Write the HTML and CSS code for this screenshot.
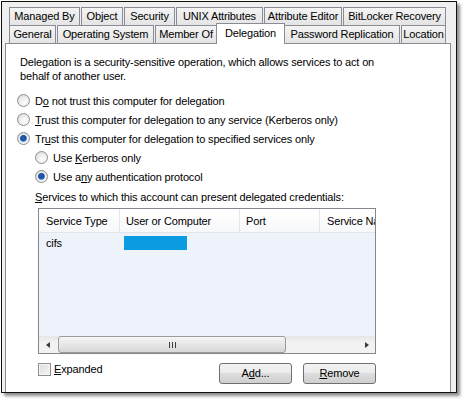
FILE: index.html
```html
<!DOCTYPE html>
<html>
<head>
<meta charset="utf-8">
<link rel="stylesheet" href="styles.css">
</head>
<body>
<div class="frame">
  <div class="tabs">
    <div class="tabrow">
      <div class="tab t-managed">Managed By</div>
      <div class="tab t-object">Object</div>
      <div class="tab t-security">Security</div>
      <div class="tab t-unix">UNIX Attributes</div>
      <div class="tab t-attr">Attribute Editor</div>
      <div class="tab t-bitlocker">BitLocker Recovery</div>
    </div>
    <div class="tabrow">
      <div class="tab t-general">General</div>
      <div class="tab t-os">Operating System</div>
      <div class="tab t-member">Member Of</div>
      <div class="tab t-deleg selected">Delegation</div>
      <div class="tab t-pwd">Password Replication</div>
      <div class="tab t-loc">Location</div>
    </div>
  </div>
  <div class="panel">
    <p class="desc">Delegation is a security-sensitive operation, which allows services to act on<br>behalf of another user.</p>
    <div class="opts">
      <div class="opt"><span class="radio"></span><span>D<u>o</u> not trust this computer for delegation</span></div>
      <div class="opt"><span class="radio"></span><span><u>T</u>rust this computer for delegation to any service (Kerberos only)</span></div>
      <div class="opt"><span class="radio on"></span><span>Tr<u>u</u>st this computer for delegation to specified services only</span></div>
      <div class="sub">
        <div class="opt"><span class="radio"></span><span>Use <u>K</u>erberos only</span></div>
        <div class="opt"><span class="radio on"></span><span>Use a<u>n</u>y authentication protocol</span></div>
        <div class="svc-label"><u>S</u>ervices to which this account can present delegated credentials:</div>
        <div class="list">
          <div class="lhead">
            <div class="col c1">Service Type</div>
            <div class="col c2">User or Computer</div>
            <div class="col c3">Port</div>
            <div class="col c4">Service Name</div>
          </div>
          <div class="lbody">
            <div class="lrow">
              <div class="cell c1">cifs</div>
              <div class="cell c2"><span class="redact"></span></div>
            </div>
          </div>
          <div class="hscroll">
            <div class="sbtn"><span class="arr-left"></span></div>
            <div class="track"><div class="thumb"><span class="grip"></span></div></div>
            <div class="sbtn"><span class="arr-right"></span></div>
          </div>
        </div>
        <div class="bottom">
          <div class="check"><span class="box"></span><span><u>E</u>xpanded</span></div>
          <div class="buttons">
            <div class="btn">A<u>d</u>d...</div>
            <div class="btn"><u>R</u>emove</div>
          </div>
        </div>
      </div>
    </div>
  </div>
</div>
</body>
</html>
```
FILE: styles.css
```css
* { box-sizing: border-box; }
html, body { margin: 0; padding: 0; }
body {
  background: #fff;
  font-family: "Liberation Sans", Arial, sans-serif;
  font-size: 11px;
  letter-spacing: -0.15px;
  color: #000;
  width: 464px;
  height: 400px;
  overflow: hidden;
}
u { text-decoration: underline; text-underline-offset: 1px; }

.frame {
  margin: 1px 0 0 1px;
  width: 456px;
  height: 392px;
  border: 1px solid #111;
  background: #f0f0f0;
  box-shadow: 3px 3px 3px rgba(0,0,0,0.45);
  padding: 5px 5px 0 3px;
  display: flex;
  flex-direction: column;
  overflow: hidden;
}

.tabs { margin-left: 4px; width: 437px; }
.tabrow { display: flex; gap: 1px; height: 18px; align-items: flex-start; }
.tab {
  height: 18px;
  border: 1px solid #898c95;
  border-bottom: 0;
  background: linear-gradient(#f4f4f4, #e4e4e4);
  text-align: center;
  line-height: 17px;
  white-space: nowrap;
  overflow: hidden;
}
.t-managed { width: 71px; }
.t-object { width: 42px; }
.t-security { width: 51px; }
.t-unix { width: 87px; }
.t-attr { width: 78px; }
.t-bitlocker { width: 103px; }
.t-general { width: 47px; }
.t-os { width: 97px; }
.t-member { width: 62px; }
.t-deleg { width: 65px; }
.t-pwd { width: 116px; }
.t-loc { width: 45px; }
.tab.selected {
  position: relative;
  z-index: 1;
  width: 69px;
  height: 21px;
  margin: -2px -2px -1px;
  background: #fff;
  line-height: 19px;
}

.panel {
  flex: 1;
  background: #fff;
  border: 1px solid #898c95;
  border-bottom: 0;
  padding: 11px 0 0 11px;
}
.desc { margin: 0 0 0 3px; line-height: 14px; }
.opts { margin-top: 8px; }
.opt { display: flex; align-items: center; height: 19px; gap: 5px; white-space: nowrap; }
.radio {
  flex: none;
  position: relative;
  width: 13px;
  height: 13px;
  border-radius: 50%;
  border: 1px solid #8e8f8f;
  background: radial-gradient(circle at 60% 65%, #fdfdfd 0, #efefef 45%, #cfcfcf 100%);
}
.radio.on::after {
  content: "";
  position: absolute;
  left: 2px;
  top: 2px;
  width: 7px;
  height: 7px;
  border-radius: 50%;
  background: radial-gradient(circle at 45% 40%, #2b62b0 0, #174b9c 45%, #7fb2ea 75%, #c4dbf3 100%);
}
.sub { margin-left: 18px; }
.svc-label { margin-top: 4px; line-height: 14px; white-space: nowrap; }

.list {
  margin: 4px 0 0 3px;
  width: 338px;
  height: 146px;
  border: 1px solid #828790;
  background: #eef3fb;
  display: flex;
  flex-direction: column;
  overflow: hidden;
}
.lhead {
  display: flex;
  height: 24px;
  flex: none;
  background: linear-gradient(#ffffff, #f7f8fa);
  border-bottom: 1px solid #e3e5e8;
  white-space: nowrap;
}
.col { height: 23px; line-height: 25px; padding-left: 7px; border-right: 1px solid #e3e5e8; flex: none; overflow: hidden; }
.c1 { width: 81px; }
.c2 { width: 120px; padding-left: 6px; }
.c3 { width: 80px; padding-left: 6px; }
.c4 { width: 90px; border-right: 0; }
.lbody { flex: 1; }
.lrow { display: flex; height: 20px; align-items: center; }
.cell { flex: none; padding-left: 7px; }
.cell.c2 { padding-left: 4px; display: flex; align-items: center; }
.redact { display: block; width: 63px; height: 14px; background: #0a9be0; }

.hscroll {
  flex: none;
  height: 17px;
  display: flex;
  background: linear-gradient(#e6e6e6, #f2f2f2 40%, #f2f2f2);
}
.sbtn { width: 17px; display: flex; align-items: center; justify-content: center; }
.arr-left { width: 0; height: 0; border-top: 3.5px solid transparent; border-bottom: 3.5px solid transparent; border-right: 4px solid #3a3a3a; }
.arr-right { width: 0; height: 0; border-top: 3.5px solid transparent; border-bottom: 3.5px solid transparent; border-left: 4px solid #3a3a3a; }
.track { flex: 1; padding: 0 72px 0 2px; display: flex; }
.thumb {
  flex: 1;
  height: 17px;
  border: 1px solid #9b9b9b;
  border-radius: 3px;
  background: linear-gradient(#f6f6f6, #e6e6e6 50%, #d8d8d8);
  display: flex;
  align-items: center;
  justify-content: center;
}
.grip {
  width: 7px;
  height: 6px;
  background: repeating-linear-gradient(90deg, #404040 0 1px, transparent 1px 3px);
}

.bottom {
  margin: 9px 0 0 3px;
  width: 338px;
  display: flex;
  justify-content: space-between;
  align-items: flex-start;
}
.check { display: flex; align-items: center; gap: 3px; height: 13px; line-height: 13px; }
.box {
  width: 13px;
  height: 13px;
  border: 1px solid #8e8f8f;
  background: linear-gradient(135deg, #dcdcdc, #f8f8f8);
  box-shadow: inset 0 0 0 1px #f4f4f4;
}
.buttons { display: flex; gap: 11px; }
.btn {
  width: 73px;
  height: 21px;
  border: 1px solid #707070;
  border-radius: 3px;
  background: linear-gradient(#f2f2f2 0%, #ebebeb 50%, #dddddd 50%, #cfcfcf 100%);
  text-align: center;
  line-height: 19px;
}
```
